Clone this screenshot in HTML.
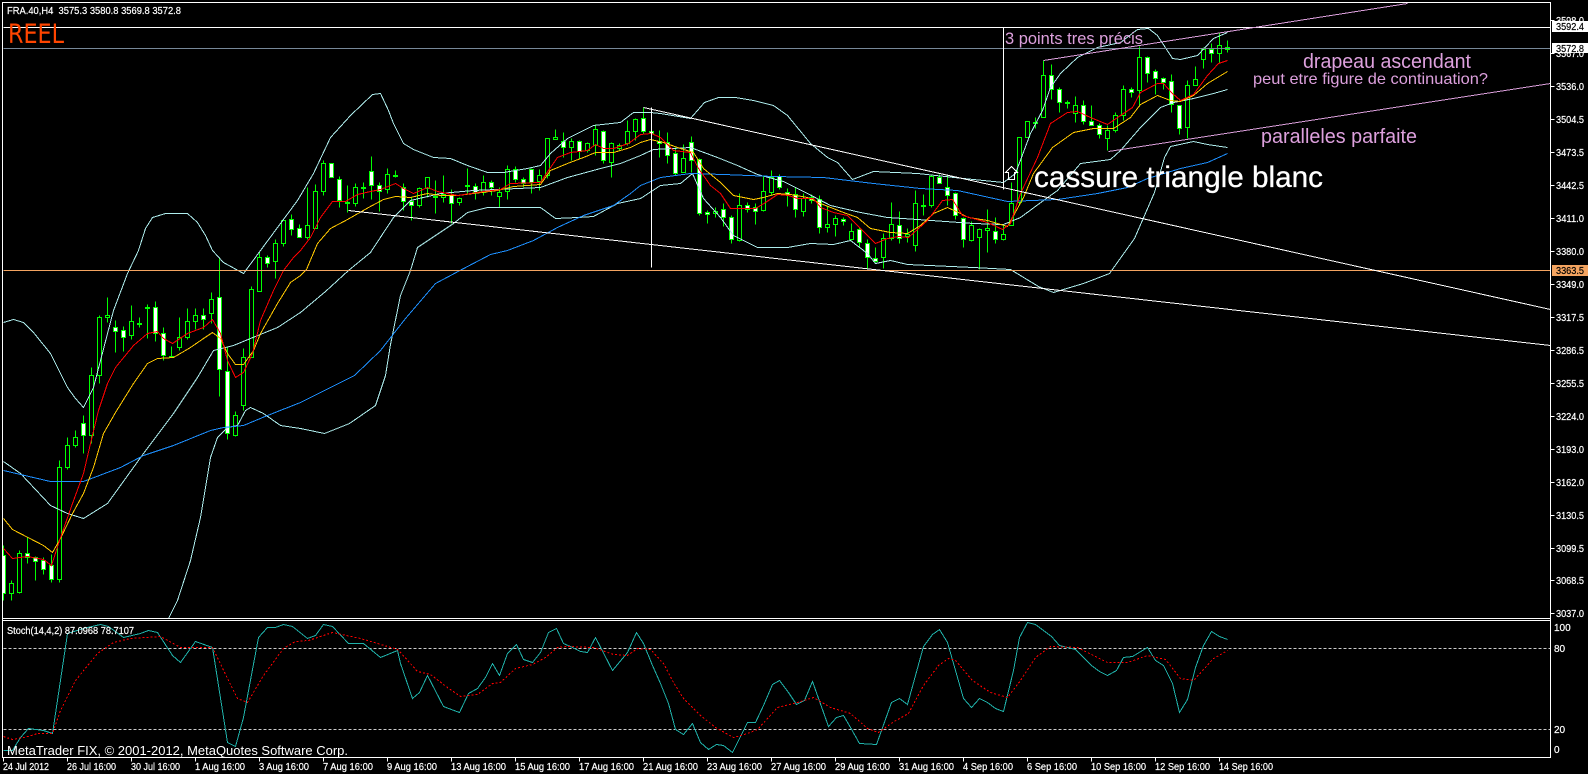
<!DOCTYPE html>
<html lang="fr"><head><meta charset="utf-8"><title>FRA.40,H4</title>
<style>
html,body{margin:0;padding:0;background:#000;overflow:hidden}
svg{display:block;position:absolute;left:0;top:0}
text{font-family:"Liberation Sans",sans-serif}
.s{font-size:10px;fill:#fff;stroke:#fff;stroke-width:.2}
.k{font-size:10px;fill:#000;stroke:#000;stroke-width:.2}
.p{fill:#dda0dd}
</style></head><body>
<svg width="1588" height="774" viewBox="0 0 1588 774" xmlns="http://www.w3.org/2000/svg">
<defs><clipPath id="m"><rect x="3" y="3" width="1547" height="615"/></clipPath></defs>
<rect width="1588" height="774" fill="#000"/>
<g clip-path="url(#m)">
<g transform="translate(.5 .5)" shape-rendering="crispEdges" fill="none">
<!-- wicks -->
<path stroke="#0f0" d="M3 545V600M11 580V600M19 550V593M27 537V563M35 556V580M43 557V574M51 554V582M59 460V582M67 437V469M75 430V447M83 415V453M91 367V443M99 315V383M107 297V322M115 320V352M123 326V351M131 305V339M139 317V327M147 304V338M155 301V341M163 327V360M171 346V357M179 317V350M187 308V339M195 308V329M203 308V329M211 292V323M219 258V396M227 347V439M235 411V436M243 348V410M251 286V357M259 252V291M267 255V267M275 239V278M283 219V246M291 214V235M299 224V237M307 187V239M315 184V228M323 160V195M339 176V207M347 185V212M355 183V206M363 182V198M371 156V199M379 182V211M387 168V193M395 170V177M403 183V210M411 197V220M419 187V207M427 177V197M435 180V213M443 175V202M451 189V223M459 197V205M467 168V193M475 183V199M483 175V195M491 180V195M499 187V207M507 165V199M515 166V182M523 177V187M531 168V193M539 169V190M547 138V178M555 129V139M563 132V157M571 138V160M579 140V158M587 142V152M595 124V155M603 130V163M611 142V177M619 143V150M627 120V145M635 118V140M643 107V133M651 120V143M659 130V157M667 132V163M675 147V175M683 144V172M691 136V172M699 158V215M707 210V223M715 207V217M723 203V226M731 215V243M739 193V241M747 202V212M755 203V224M763 176V211M771 170V195M779 174V189M787 188V206M795 187V217M803 193V216M811 194V203M819 195V233M827 206V232M835 215V236M843 217V225M851 223V240M859 227V247M867 239V268M875 247V262M883 233V268M891 202V240M899 211V243M907 228V242M915 190V251M923 194V215M931 175V207M939 174V183M947 175V205M955 192V219M963 217V247M971 221V241M979 228V269M987 209V252M995 217V243M1003 225V240M1011 182V225M1019 137V205M1027 121V137M1035 117V128M1043 60V117M1051 64V99M1059 87V112M1067 100V108M1075 96V122M1083 100V124M1091 105V125M1099 123V138M1107 125V150M1115 112V132M1123 85V120M1131 87V97M1139 46V105M1147 56V82M1155 69V94M1163 77V89M1171 74V112M1179 105V134M1187 80V138M1195 66V85M1203 47V68M1211 43V62M1219 33V63M1227 40V52"/>
<!-- bear bodies (white) -->
<path stroke="#0f0" fill="#fff" d="M1 555h4V593h-4zM25 553h4V557h-4zM33 557h4V561h-4zM41 560h4V569h-4zM49 565h4V579h-4zM81 423h4V435h-4zM113 327h4V331h-4zM121 330h4V337h-4zM153 307h4V333h-4zM161 333h4V355h-4zM201 315h4V319h-4zM217 297h4V369h-4zM225 371h4V433h-4zM265 257h4V263h-4zM289 219h4V229h-4zM297 228h4V237h-4zM329 163h4V177h-4zM337 179h4V200h-4zM369 171h4V185h-4zM377 185h4V191h-4zM401 187h4V201h-4zM409 201h4V205h-4zM449 195h4V203h-4zM473 186h4V192h-4zM489 182h4V187h-4zM513 169h4V179h-4zM521 179h4V183h-4zM529 169h4V182h-4zM561 141h4V147h-4zM577 141h4V151h-4zM601 131h4V160h-4zM641 118h4V131h-4zM649 131h4V133h-4zM657 141h4V143h-4zM665 142h4V155h-4zM673 153h4V173h-4zM689 142h4V160h-4zM697 159h4V213h-4zM705 212h4V214h-4zM721 209h4V217h-4zM729 217h4V239h-4zM745 205h4V209h-4zM753 207h4V211h-4zM777 176h4V187h-4zM785 192h4V194h-4zM793 194h4V209h-4zM809 197h4V200h-4zM817 199h4V227h-4zM841 219h4V221h-4zM857 229h4V242h-4zM865 243h4V257h-4zM873 258h4V261h-4zM897 225h4V238h-4zM937 177h4V183h-4zM945 187h4V195h-4zM953 193h4V215h-4zM961 218h4V239h-4zM993 231h4V239h-4zM1049 75h4V89h-4zM1057 89h4V102h-4zM1081 105h4V121h-4zM1089 121h4V125h-4zM1097 125h4V134h-4zM1129 89h4V92h-4zM1145 57h4V73h-4zM1153 71h4V78h-4zM1161 78h4V82h-4zM1169 81h4V104h-4zM1177 105h4V128h-4zM1209 49h4V53h-4zM1225 47h4V49h-4z"/>
<!-- bull bodies (black) -->
<path stroke="#0f0" fill="#000" d="M9 583h4V593h-4zM17 553h4V592h-4zM57 467h4V579h-4zM65 445h4V467h-4zM73 437h4V445h-4zM89 375h4V435h-4zM97 317h4V375h-4zM105 315h4V317h-4zM129 321h4V335h-4zM137 323h4V324h-4zM145 307h4V308h-4zM169 356h4V357h-4zM177 337h4V347h-4zM185 321h4V337h-4zM193 315h4V321h-4zM209 299h4V313h-4zM233 415h4V435h-4zM241 357h4V405h-4zM249 289h4V357h-4zM257 257h4V291h-4zM273 243h4V261h-4zM281 220h4V243h-4zM305 225h4V237h-4zM313 191h4V228h-4zM321 163h4V191h-4zM345 202h4V203h-4zM353 187h4V203h-4zM361 187h4V188h-4zM385 174h4V189h-4zM393 175h4V176h-4zM417 188h4V205h-4zM425 177h4V188h-4zM433 196h4V197h-4zM441 194h4V197h-4zM457 198h4V202h-4zM465 185h4V186h-4zM481 182h4V192h-4zM497 192h4V196h-4zM505 169h4V191h-4zM537 175h4V181h-4zM545 138h4V175h-4zM553 137h4V139h-4zM569 141h4V147h-4zM585 143h4V150h-4zM593 129h4V145h-4zM609 143h4V162h-4zM617 145h4V148h-4zM625 131h4V143h-4zM633 119h4V131h-4zM681 158h4V172h-4zM713 211h4V213h-4zM737 205h4V240h-4zM761 191h4V210h-4zM769 177h4V192h-4zM801 198h4V211h-4zM825 224h4V227h-4zM833 218h4V224h-4zM849 231h4V239h-4zM881 238h4V257h-4zM889 224h4V238h-4zM905 234h4V236h-4zM913 203h4V245h-4zM921 205h4V206h-4zM929 176h4V205h-4zM969 225h4V240h-4zM977 229h4V237h-4zM985 228h4V230h-4zM1001 234h4V239h-4zM1009 203h4V225h-4zM1017 137h4V202h-4zM1025 121h4V137h-4zM1033 122h4V123h-4zM1041 75h4V117h-4zM1065 102h4V103h-4zM1073 105h4V113h-4zM1105 130h4V138h-4zM1113 115h4V130h-4zM1121 89h4V115h-4zM1137 57h4V90h-4zM1185 85h4V127h-4zM1193 79h4V85h-4zM1201 49h4V59h-4zM1217 45h4V53h-4z"/>
<!-- Bollinger upper / mid / lower -->
<g stroke="#afeeee">
<polyline points="3,322 13,319 23,322 33,332 50,353 67,387 75,398 83,407 93,387 113,310 127,273 138,250 145,228 152,217 165,213 187,213 197,222 205,235 212,250 223,262 243,273 260,250 297,200 313,173 330,137 350,115 372,94 380,93 388,110 393,123 403,143 413,149 433,157 450,158 467,165 487,172 503,172 527,168 540,165 550,153 567,138 593,125 620,122 633,112 650,112 660,113 690,118 704,102 718,97 735,97 753,100 773,105 787,115 810,143 827,157 837,162 852,179 873,171 917,173 963,178 1003,182 1015,173 1030,133 1042,110 1050,87 1060,73 1077,57 1097,47 1120,42 1137,29 1148,28 1157,35 1172,58 1180,59 1197,55 1213,38 1227,32"/>
<polyline points="3,461 20,473 50,505 67,513 83,518 107,503 143,453 173,413 197,377 213,350 233,345 250,338 277,327 300,312 325,291 348,270 370,252 393,217 410,200 440,193 473,190 540,187 567,177 600,168 620,163 640,155 653,149 690,147 717,157 737,165 757,174 783,181 807,193 830,205 860,212 887,217 917,219 973,223 1003,224 1020,217 1043,200 1057,190 1080,163 1110,159 1120,150 1140,127 1160,107 1173,102 1193,98 1213,93 1227,89"/>
<polyline points="168,618 177,600 190,560 200,517 210,457 217,437 227,427 237,425 245,410 250,407 263,413 280,425 300,428 324,433 349,423 375,405 385,375 390,344 400,295 410,270 417,247 435,235 453,223 467,212 487,207 540,207 555,218 577,217 593,216 617,203 640,198 660,185 680,183 692,173 703,198 720,217 733,235 757,247 787,247 810,243 833,244 850,240 867,253 875,263 890,260 907,264 973,267 1010,269 1038,286 1053,292 1083,283 1109,273 1134,238 1154,192 1164,157 1170,146 1193,141 1207,144 1227,147"/>
</g>
<polyline stroke="#1e90ff" points="3,470 20,474 50,481 83,481 120,467 143,455 173,445 210,430 223,427 243,425 267,415 300,402 330,387 354,375 380,350 405,318 435,283 467,266 490,254 507,250 533,240 557,227 583,215 613,205 630,193 640,185 660,177 690,173 723,174 773,176 823,177 873,183 920,188 957,190 1007,201 1057,199 1097,193 1127,187 1147,178 1180,168 1207,162 1227,153"/>
<polyline stroke="#ffc800" points="3,518 12,529 43,545 52,552 60,538 72,513 83,493 93,467 103,433 115,412 133,383 147,363 157,358 173,357 190,347 203,338 212,332 220,338 227,353 235,364 243,364 253,350 260,333 277,303 290,282 300,275 306,269 317,243 330,228 347,219 368,207 383,199 395,196 410,197 427,193 440,195 457,195 473,193 497,190 513,186 540,184 550,170 567,163 583,157 595,152 613,152 630,147 640,142 650,139 663,142 680,148 693,152 703,168 720,182 733,195 753,199 763,197 777,193 790,194 807,197 820,203 843,212 857,217 870,228 890,232 907,233 920,225 933,213 947,207 958,212 968,217 987,220 1007,226 1023,197 1033,173 1052,147 1073,132 1093,128 1113,128 1130,117 1140,104 1157,95 1170,100 1180,101 1193,95 1207,83 1227,71"/>
<polyline stroke="#f00" points="3,548 12,558 27,556 43,559 51,565 59,540 72,503 83,473 90,443 98,410 107,383 115,367 133,345 147,333 157,331 163,338 172,343 187,333 203,327 212,319 220,333 227,360 235,377 243,372 252,353 260,320 273,290 283,270 293,257 300,250 310,237 320,217 332,201 345,201 357,194 370,191 380,189 395,183 403,188 413,193 427,187 437,191 447,193 457,195 470,193 483,191 500,189 510,183 540,182 550,167 557,157 570,152 587,150 595,144 603,148 613,148 628,143 640,134 651,133 660,137 673,150 690,152 698,168 710,185 720,193 730,208 740,208 755,208 765,202 777,194 788,195 797,198 813,198 820,207 833,212 847,215 860,228 875,243 887,238 898,236 908,237 927,220 942,200 952,199 962,215 987,222 1002,229 1010,223 1020,193 1037,157 1050,123 1067,112 1077,111 1090,117 1107,124 1120,115 1132,107 1140,92 1157,83 1163,83 1172,93 1180,100 1193,94 1207,75 1218,63 1227,60"/>
<!-- horizontals -->
<path stroke="#fff" d="M3 27H1550"/>
<path stroke="#778899" d="M3 48H1550"/>
<path stroke="#f4a460" d="M3 270H1550"/>
<!-- trend lines -->
<path stroke="#fff" d="M348 210L1550 345M643 107L1550 309M651 107V267M1003 27V189"/>
<path stroke="#dda0dd" d="M1043 60L1407 3M1108 151L1550 83"/>
<path stroke="#fff" d="M1011 166L1005 172H1008V179H1014V172H1017Z"/>
</g>
</g>
<!-- stochastic -->
<g transform="translate(.5 .5)" shape-rendering="crispEdges" fill="none">
<path stroke="#ccc" stroke-dasharray="3 2" d="M3 648H1550M3 729H1550"/>
<polyline stroke="#20b2aa" points="3,750 12,750 20,737 28,728 43,730 52,733 67,633 83,628 100,624 108,626 123,637 140,633 148,630 157,632 172,655 180,662 195,641 212,647 227,742 235,746 243,717 258,637 267,627 275,627 283,624 292,626 307,638 315,635 323,624 332,626 348,643 363,643 380,657 397,650 400,663 412,698 419,692 427,675 443,706 459,712 468,693 477,688 485,677 492,663 499,675 507,653 516,644 523,659 532,662 540,652 548,632 556,628 563,643 572,647 580,651 587,652 595,637 612,670 627,652 636,632 643,643 652,665 660,683 668,703 675,729 683,734 692,723 700,742 708,749 716,744 723,745 732,752 747,722 755,722 763,705 772,684 779,680 788,692 796,704 804,700 812,681 828,726 836,717 843,715 850,727 859,743 876,744 891,702 899,698 907,704 923,646 932,634 939,629 947,642 963,698 971,707 979,698 987,702 995,708 1003,711 1013,670 1019,637 1027,622 1035,624 1051,636 1059,645 1075,649 1091,665 1099,671 1107,675 1116,670 1123,657 1132,656 1147,647 1155,660 1163,665 1172,683 1179,712 1187,699 1195,667 1203,645 1211,631 1219,636 1227,639"/>
<polyline stroke="#f00" stroke-dasharray="2 2" points="3,736 12,739 28,736 37,733 52,733 60,710 75,680 97,653 113,642 130,638 160,636 180,647 212,647 227,678 237,698 247,702 263,675 283,648 295,641 308,640 332,632 360,638 377,643 397,649 400,652 417,671 430,674 447,687 460,696 477,694 492,683 500,682 515,668 532,664 545,657 557,647 567,646 593,647 613,654 627,655 637,648 650,649 663,663 673,682 683,698 700,715 715,727 733,737 747,733 757,729 777,707 797,702 813,697 830,707 850,713 867,728 878,732 892,722 908,713 923,685 938,665 948,658 955,660 972,680 990,692 1007,697 1020,680 1035,657 1050,646 1077,647 1107,662 1127,662 1147,655 1165,659 1180,678 1193,680 1213,658 1227,650"/>
<!-- frame -->
<path stroke="#fff" d="M2 2H1550V757H2ZM2 618H1550M2 620H1550"/>
<!-- axis ticks -->
<path stroke="#fff" d="M1550 20h4M1550 53h4M1550 86h4M1550 119h4M1550 152h4M1550 185h4M1550 218h4M1550 251h4M1550 284h4M1550 317h4M1550 350h4M1550 383h4M1550 416h4M1550 449h4M1550 482h4M1550 515h4M1550 548h4M1550 580h4M1550 613h4M3 757v4M67 757v4M131 757v4M195 757v4M259 757v4M323 757v4M387 757v4M451 757v4M515 757v4M579 757v4M643 757v4M707 757v4M771 757v4M835 757v4M899 757v4M963 757v4M1027 757v4M1091 757v4M1155 757v4M1219 757v4"/>
</g>
<!-- price axis -->
<g>
<text class="s" x="1556" y="24" textLength="28" lengthAdjust="spacingAndGlyphs">3598.0</text>
<text class="s" x="1556" y="57" textLength="28" lengthAdjust="spacingAndGlyphs">3567.0</text>
<text class="s" x="1556" y="90" textLength="28" lengthAdjust="spacingAndGlyphs">3536.0</text>
<text class="s" x="1556" y="123" textLength="28" lengthAdjust="spacingAndGlyphs">3504.5</text>
<text class="s" x="1556" y="156" textLength="28" lengthAdjust="spacingAndGlyphs">3473.5</text>
<text class="s" x="1556" y="189" textLength="28" lengthAdjust="spacingAndGlyphs">3442.5</text>
<text class="s" x="1556" y="222" textLength="28" lengthAdjust="spacingAndGlyphs">3411.0</text>
<text class="s" x="1556" y="255" textLength="28" lengthAdjust="spacingAndGlyphs">3380.0</text>
<text class="s" x="1556" y="288" textLength="28" lengthAdjust="spacingAndGlyphs">3349.0</text>
<text class="s" x="1556" y="321" textLength="28" lengthAdjust="spacingAndGlyphs">3317.5</text>
<text class="s" x="1556" y="354" textLength="28" lengthAdjust="spacingAndGlyphs">3286.5</text>
<text class="s" x="1556" y="387" textLength="28" lengthAdjust="spacingAndGlyphs">3255.5</text>
<text class="s" x="1556" y="420" textLength="28" lengthAdjust="spacingAndGlyphs">3224.0</text>
<text class="s" x="1556" y="453" textLength="28" lengthAdjust="spacingAndGlyphs">3193.0</text>
<text class="s" x="1556" y="486" textLength="28" lengthAdjust="spacingAndGlyphs">3162.0</text>
<text class="s" x="1556" y="519" textLength="28" lengthAdjust="spacingAndGlyphs">3130.5</text>
<text class="s" x="1556" y="552" textLength="28" lengthAdjust="spacingAndGlyphs">3099.5</text>
<text class="s" x="1556" y="584" textLength="28" lengthAdjust="spacingAndGlyphs">3068.5</text>
<text class="s" x="1556" y="617" textLength="28" lengthAdjust="spacingAndGlyphs">3037.0</text>
<text class="s" x="1554" y="631">100</text>
<text class="s" x="1554" y="652">80</text>
<text class="s" x="1554" y="733">20</text>
<text class="s" x="1554" y="753">0</text>
</g>
<rect x="1552" y="21" width="36" height="11" fill="#fff"/>
<text class="k" x="1556" y="30" textLength="28" lengthAdjust="spacingAndGlyphs">3592.4</text>
<rect x="1552" y="43" width="36" height="10" fill="#fff"/>
<text class="k" x="1556" y="52" textLength="28" lengthAdjust="spacingAndGlyphs">3572.8</text>
<rect x="1552" y="265" width="36" height="11" fill="#f4a460"/>
<text class="k" x="1556" y="274" textLength="28" lengthAdjust="spacingAndGlyphs">3363.5</text>
<!-- time axis -->
<text class="s" x="3" y="770" textLength="46" lengthAdjust="spacingAndGlyphs">24 Jul 2012</text>
<text class="s" x="67" y="770" textLength="49" lengthAdjust="spacingAndGlyphs">26 Jul 16:00</text>
<text class="s" x="131" y="770" textLength="49" lengthAdjust="spacingAndGlyphs">30 Jul 16:00</text>
<text class="s" x="195" y="770" textLength="50" lengthAdjust="spacingAndGlyphs">1 Aug 16:00</text>
<text class="s" x="259" y="770" textLength="50" lengthAdjust="spacingAndGlyphs">3 Aug 16:00</text>
<text class="s" x="323" y="770" textLength="50" lengthAdjust="spacingAndGlyphs">7 Aug 16:00</text>
<text class="s" x="387" y="770" textLength="50" lengthAdjust="spacingAndGlyphs">9 Aug 16:00</text>
<text class="s" x="451" y="770" textLength="55" lengthAdjust="spacingAndGlyphs">13 Aug 16:00</text>
<text class="s" x="515" y="770" textLength="55" lengthAdjust="spacingAndGlyphs">15 Aug 16:00</text>
<text class="s" x="579" y="770" textLength="55" lengthAdjust="spacingAndGlyphs">17 Aug 16:00</text>
<text class="s" x="643" y="770" textLength="55" lengthAdjust="spacingAndGlyphs">21 Aug 16:00</text>
<text class="s" x="707" y="770" textLength="55" lengthAdjust="spacingAndGlyphs">23 Aug 16:00</text>
<text class="s" x="771" y="770" textLength="55" lengthAdjust="spacingAndGlyphs">27 Aug 16:00</text>
<text class="s" x="835" y="770" textLength="55" lengthAdjust="spacingAndGlyphs">29 Aug 16:00</text>
<text class="s" x="899" y="770" textLength="55" lengthAdjust="spacingAndGlyphs">31 Aug 16:00</text>
<text class="s" x="963" y="770" textLength="50" lengthAdjust="spacingAndGlyphs">4 Sep 16:00</text>
<text class="s" x="1027" y="770" textLength="50" lengthAdjust="spacingAndGlyphs">6 Sep 16:00</text>
<text class="s" x="1091" y="770" textLength="55" lengthAdjust="spacingAndGlyphs">10 Sep 16:00</text>
<text class="s" x="1155" y="770" textLength="55" lengthAdjust="spacingAndGlyphs">12 Sep 16:00</text>
<text class="s" x="1219" y="770" textLength="54" lengthAdjust="spacingAndGlyphs">14 Sep 16:00</text>
<!-- labels -->
<text class="s" x="7" y="14" textLength="174" lengthAdjust="spacingAndGlyphs" xml:space="preserve">FRA.40,H4  3575.3 3580.8 3569.8 3572.8</text>
<text class="s" x="7" y="634" textLength="127" lengthAdjust="spacingAndGlyphs">Stoch(14,4,2) 87.0968 78.7107</text>
<text x="7" y="755" font-size="13" fill="#fff" textLength="341" lengthAdjust="spacingAndGlyphs">MetaTrader FIX, © 2001-2012, MetaQuotes Software Corp.</text>
<text x="8" y="43" font-size="27" fill="#ff4500" textLength="56" lengthAdjust="spacingAndGlyphs" style="font-family:'DejaVu Sans',sans-serif">REEL</text>
<text class="p" x="1005" y="44" font-size="17" textLength="138" lengthAdjust="spacingAndGlyphs">3 points tres précis</text>
<text class="p" x="1303" y="68" font-size="20" textLength="168" lengthAdjust="spacingAndGlyphs">drapeau ascendant</text>
<text class="p" x="1253" y="84" font-size="16" textLength="235" lengthAdjust="spacingAndGlyphs">peut etre figure de continuation?</text>
<text class="p" x="1261" y="143" font-size="20" textLength="156" lengthAdjust="spacingAndGlyphs">paralleles parfaite</text>
<text x="1034" y="187" font-size="30" fill="#fff" stroke="#fff" stroke-width=".3" textLength="289" lengthAdjust="spacingAndGlyphs">cassure triangle blanc</text>
</svg>
</body></html>
